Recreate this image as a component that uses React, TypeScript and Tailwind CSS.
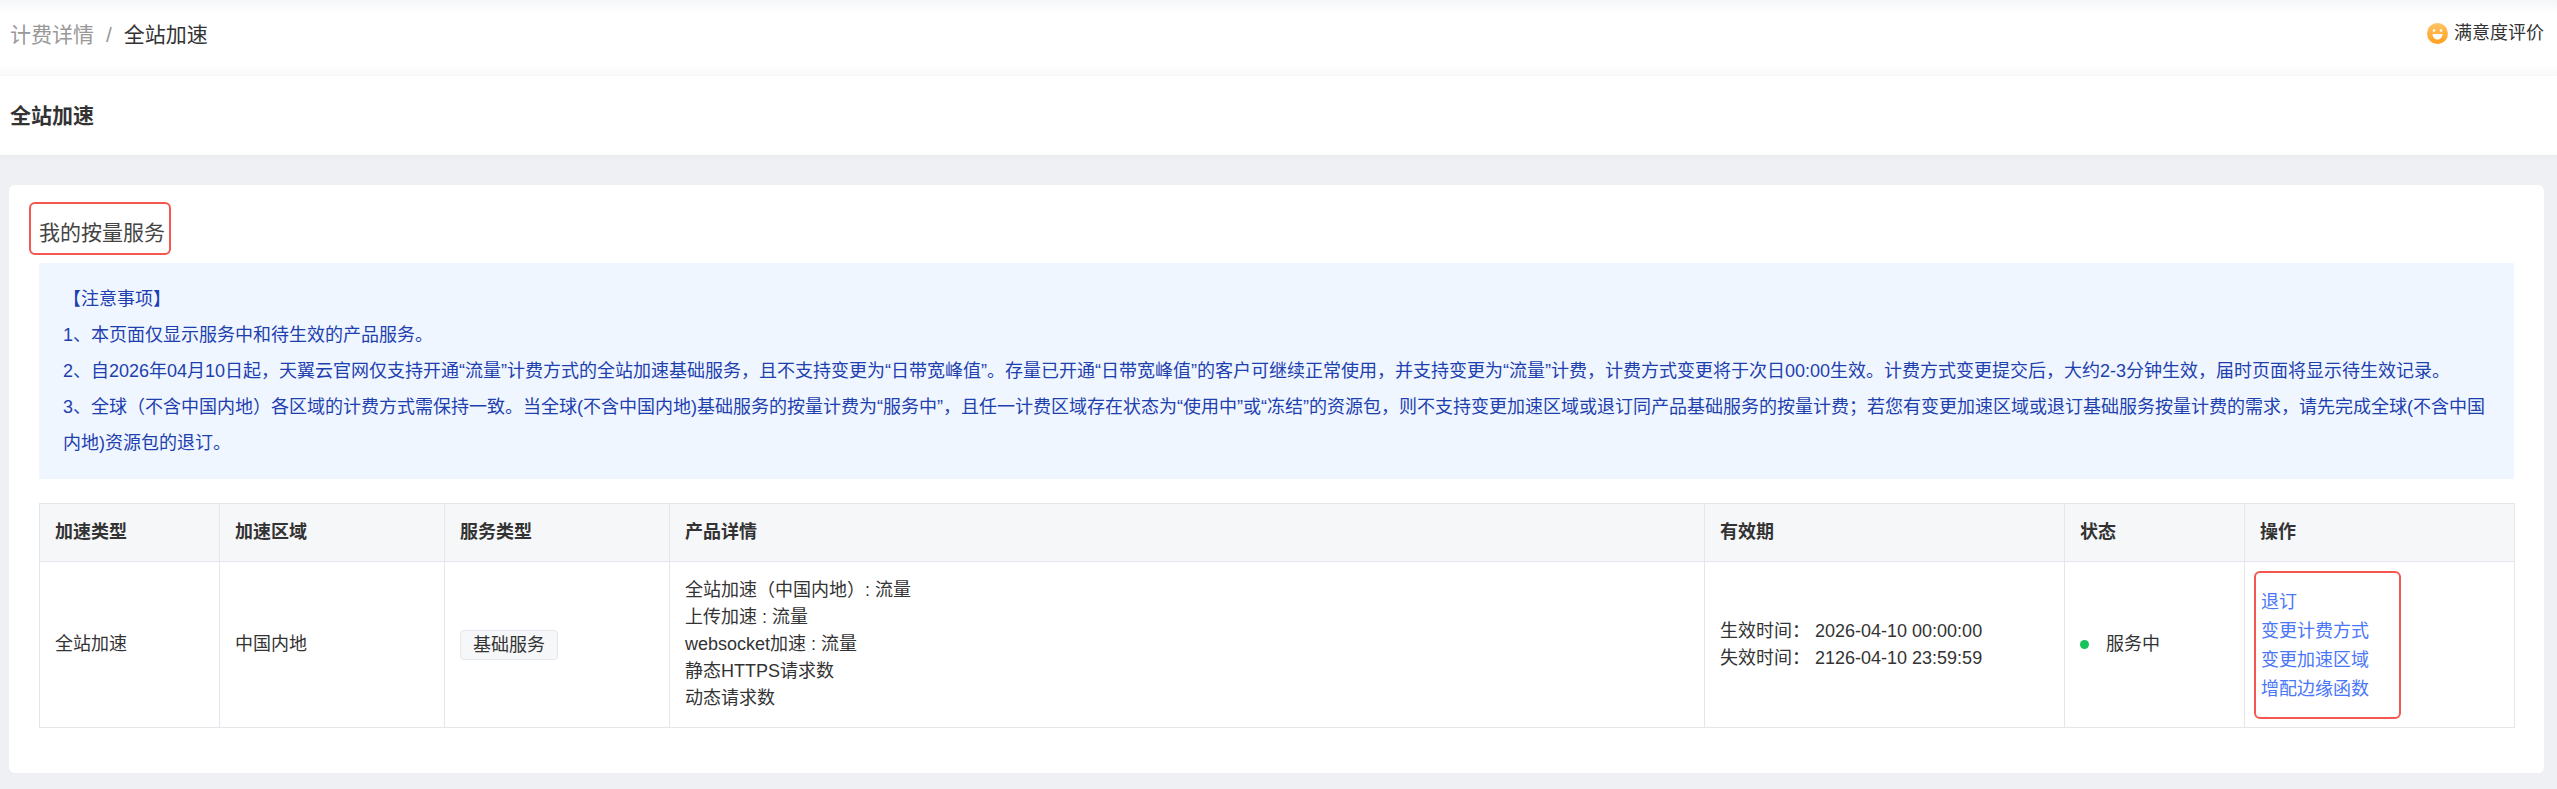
const notes = [
  '1、本页面仅显示服务中和待生效的产品服务。',
  '2、自2026年04月10日起，天翼云官网仅支持开通“流量”计费方式的全站加速基础服务，且不支持变更为“日带宽峰值”。存量已开通“日带宽峰值”的客户可继续正常使用，并支持变更为“流量”计费，计费方式变更将于次日00:00生效。计费方式变更提交后，大约2-3分钟生效，届时页面将显示待生效记录。',
  '3、全球（不含中国内地）各区域的计费方式需保持一致。当全球(不含中国内地)基础服务的按量计费为“服务中”，且任一计费区域存在状态为“使用中”或“冻结”的资源包，则不支持变更加速区域或退订同产品基础服务的按量计费；若您有变更加速区域或退订基础服务按量计费的需求，请先完成全球(不含中国内地)资源包的退订。',
]

const columns = ['加速类型', '加速区域', '服务类型', '产品详情', '有效期', '状态', '操作']

const details = ['全站加速（中国内地）: 流量', '上传加速 : 流量', 'websocket加速 : 流量', '静态HTTPS请求数', '动态请求数']

const actions = ['退订', '变更计费方式', '变更加速区域', '增配边缘函数']

function Smiley() {
  return (
    <svg width="21" height="21" viewBox="0 0 21 21">
      <defs>
        <linearGradient id="smile" x1="0" y1="0" x2="0" y2="1">
          <stop offset="0" stopColor="#ffc566" />
          <stop offset="1" stopColor="#ffa01e" />
        </linearGradient>
      </defs>
      <circle cx="10.5" cy="10.5" r="10.5" fill="url(#smile)" />
      <circle cx="7" cy="7.5" r="1.3" fill="#fff" />
      <circle cx="14" cy="7.5" r="1.3" fill="#fff" />
      <path d="M5.5 11h10c0 3-2.2 5.5-5 5.5s-5-2.5-5-5.5z" fill="#fff" />
    </svg>
  )
}

export default function App() {
  return (
    <div className="min-h-screen bg-[#eff0f4] font-['Liberation_Sans','Noto_Sans_CJK_SC',sans-serif] text-[18px] text-[#333]">
      <div className="flex h-[76px] items-start justify-between bg-[linear-gradient(to_bottom,#f5f6f8_0px,#fff_14px,#fff_66px,#f8f8f9_76px)] pl-[10px] pr-[13px] pt-5">
        <div className="flex text-[21px] leading-[30px]">
          <span className="text-[#999]">计费详情</span>
          <span className="mx-3 text-[#999]">/</span>
          <span>全站加速</span>
        </div>
        <div className="flex h-[26px] items-center gap-[6px]">
          <Smiley />
          <span>满意度评价</span>
        </div>
      </div>

      <div className="flex h-[79px] items-center bg-white pl-[10px] text-[21px] font-bold">全站加速</div>

      <div className="bg-[linear-gradient(to_bottom,#ebecf0,#eff0f4_6px)] pb-4 pl-[9px] pr-[13px] pt-[30px]">
        <div className="rounded-md bg-white px-[30px] pb-[45px] pt-[17px]">
          <div className="-ml-[10px] w-fit rounded-md border-2 border-[#f5564f] pb-[5px] pl-2 pr-1 pt-[14px] text-[21px] leading-[30px] text-[#444]">
            我的按量服务
          </div>

          <div className="mt-2 bg-[#eff6ff] px-6 py-[18px] leading-[36px] text-[#1e40af]">
            <p>【注意事项】</p>
            {notes.map(n => (
              <p key={n}>{n}</p>
            ))}
          </div>

          <table className="mt-6 w-full table-fixed border-collapse border border-[#e4e6eb]">
            <colgroup>
              <col className="w-[180px]" />
              <col className="w-[225px]" />
              <col className="w-[225px]" />
              <col className="w-[1035px]" />
              <col className="w-[360px]" />
              <col className="w-[180px]" />
              <col className="w-[270px]" />
            </colgroup>
            <thead>
              <tr className="h-[58px] bg-[#f6f7f9]">
                {columns.map(c => (
                  <th key={c} className="border border-[#e4e6eb] px-[15px] text-left font-bold">
                    {c}
                  </th>
                ))}
              </tr>
            </thead>
            <tbody>
              <tr className="h-[166px]">
                <td className="border border-[#e4e6eb] px-[15px]">全站加速</td>
                <td className="border border-[#e4e6eb] px-[15px]">中国内地</td>
                <td className="border border-[#e4e6eb] px-[15px]">
                  <span className="inline-block rounded-[4px] border border-[#e4e6eb] bg-[#f6f7f9] px-3 leading-[28px]">基础服务</span>
                </td>
                <td className="border border-[#e4e6eb] px-[15px] leading-[27px]">
                  {details.map(d => (
                    <div key={d}>{d}</div>
                  ))}
                </td>
                <td className="border border-[#e4e6eb] px-[15px] leading-[27px]">
                  <div>生效时间： 2026-04-10 00:00:00</div>
                  <div>失效时间： 2126-04-10 23:59:59</div>
                </td>
                <td className="border border-[#e4e6eb] px-[15px]">
                  <div className="flex items-center gap-[17px]">
                    <span className="h-[9px] w-[9px] rounded-full bg-[#16c25a]" />
                    <span>服务中</span>
                  </div>
                </td>
                <td className="border border-[#e4e6eb] pl-[9px] pr-[10px]">
                  <div className="w-[147px] rounded-md border-2 border-[#f5564f] pb-[13px] pl-[5px] pt-[15px] leading-[29px] text-[#4a76f8]">
                    {actions.map(a => (
                      <div key={a}>{a}</div>
                    ))}
                  </div>
                </td>
              </tr>
            </tbody>
          </table>
        </div>
      </div>
    </div>
  )
}
